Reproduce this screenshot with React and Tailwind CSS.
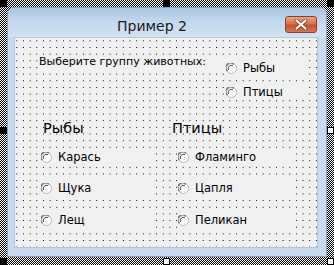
import React from 'react';

const font = { fontFamily: '"DejaVu Sans", Verdana, sans-serif' };

const Radio = ({ label, className = '' }) => (
  <div className={`flex items-center gap-[6px] h-[16px] bg-[#f0f0f0] ${className}`}>
    <svg width="11" height="11" viewBox="0 0 11 11" className="shrink-0">
      <circle cx="5.5" cy="5.5" r="5" fill="#fff" stroke="#b4b4b4" />
      <path d="M1.3 8 A4.6 4.6 0 0 1 8 1.3" fill="none" stroke="#707070" strokeWidth="1.3" />
      <path d="M2.6 7 A3.3 3.3 0 0 1 7 2.6" fill="none" stroke="#3a3a3a" strokeWidth="0.9" />
    </svg>
    <span className="text-[11.5px] leading-[16px] text-black">{label}</span>
  </div>
);

const Handle = ({ pos, dark }) => (
  <div
    className={`absolute w-[7px] h-[7px] border border-black ${dark ? 'bg-black' : 'bg-white'} ${pos}`}
  />
);

const App = () => {
  return (
    <div
      style={font}
      className="relative w-[334px] h-[265px] overflow-hidden bg-[repeating-conic-gradient(#000_0_25%,#fff_0_50%)] bg-[length:2px_2px]"
    >
      <div className="ml-[7px] mt-[7px] w-[320px] h-[250px] rounded-t-[7px] border border-[#8ba3c2] bg-[#c6daf0] flex flex-col">
        {/* title bar */}
        <div className="relative h-[29px] shrink-0 rounded-t-[6px] bg-[linear-gradient(180deg,#a9c4e4_0%,#c3d7ee_45%,#d3e2f3_100%)] flex items-center">
          <span className="ml-[109px] mt-[6px] text-[14px] leading-[18px] text-[#1b1b1b]">Пример 2</span>
          <div className="absolute right-[9px] top-[8px] w-[32px] h-[17px] rounded-[3px] border border-[#8e3f2c] bg-[linear-gradient(180deg,#eba58b_0%,#d9714f_45%,#c4532f_55%,#d6764f_100%)] flex items-center justify-center">
            <svg width="14" height="11" viewBox="0 0 14 11">
              <path d="M2.5 1.5 L11.5 9.5 M11.5 1.5 L2.5 9.5" stroke="#7a3020" strokeWidth="3.6" strokeLinecap="round" />
              <path d="M2.5 1.5 L11.5 9.5 M11.5 1.5 L2.5 9.5" stroke="#fff" strokeWidth="2.2" strokeLinecap="round" />
            </svg>
          </div>
        </div>

        {/* client area */}
        <div className="ml-[6px] mr-[8px] mb-[8px] flex-1 border border-[#b3c8e0] bg-[#f0f0f0] bg-[radial-gradient(circle,#000_0.6px,transparent_0.9px)] bg-[length:6.667px_6.667px] bg-[position:-1.5px_-0.5px]">
          <div className="flex items-start pt-[17px]">
            <div className="ml-[24px] w-[187px] h-[14px] bg-[#f0f0f0] text-[11px] leading-[14px] text-black">
              Выберите группу животных:
            </div>
            <div className="mt-[5px] flex flex-col gap-[8px]">
              <Radio label="Рыбы" className="w-[80px]" />
              <Radio label="Птицы" className="w-[80px]" />
            </div>
          </div>

          <div className="flex mt-[19px]">
            <div className="w-[137px] flex flex-col">
              <span className="ml-[28px] self-start text-[14.5px] leading-[18px] text-black">Рыбы</span>
              <Radio label="Карась" className="ml-[26px] w-[110px] mt-[12px]" />
              <Radio label="Щука" className="ml-[26px] w-[110px] mt-[15px]" />
              <Radio label="Лещ" className="ml-[26px] w-[110px] mt-[16px]" />
            </div>
            <div className="flex flex-col">
              <span className="ml-[20px] self-start text-[14.5px] leading-[18px] text-black">Птицы</span>
              <Radio label="Фламинго" className="ml-[26px] w-[116px] mt-[12px]" />
              <Radio label="Цапля" className="ml-[26px] w-[116px] mt-[15px]" />
              <Radio label="Пеликан" className="ml-[26px] w-[116px] mt-[16px]" />
            </div>
          </div>
        </div>
      </div>

      {/* selection handles */}
      <Handle pos="left-0 top-0" dark />
      <Handle pos="left-[163px] top-0" dark />
      <Handle pos="right-0 top-0" dark />
      <Handle pos="left-0 top-[127px]" dark />
      <Handle pos="right-0 top-[127px]" />
      <Handle pos="left-0 bottom-0" dark />
      <Handle pos="left-[163px] bottom-0" />
      <Handle pos="right-0 bottom-0" />
    </div>
  );
};

export default App;
